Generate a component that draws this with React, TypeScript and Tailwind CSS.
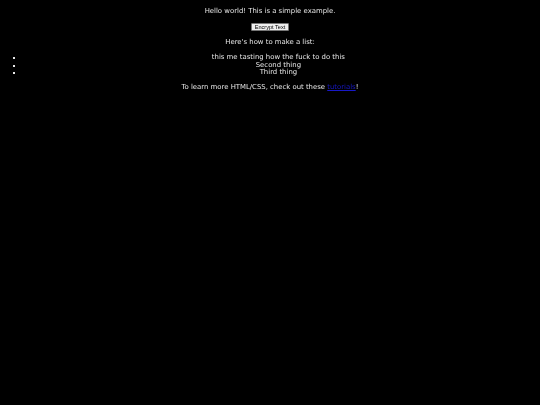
const items = ['this me tasting how the fuck to do this', 'Second thing', 'Third thing'];

export default function App() {
    return (
        <div
            className="min-h-screen bg-black px-[3.4px] pt-[8.2px] text-center text-[6.9px] leading-[7.7px] text-[#e6e6e6] antialiased [will-change:transform]"
            style={{ fontFamily: '"DejaVu Sans", sans-serif' }}
        >
            <p>Hello world! This is a simple example.</p>
            <div className="mt-[6.8px] flex justify-center">
                <button
                    className="h-[8px] rounded-[1px] border-[0.8px] border-[#767676] bg-[#efefef] px-[2.5px] text-[5.6px] leading-[6px] text-black"
                    style={{ fontFamily: '"Liberation Sans", Arial, sans-serif' }}
                >
                    Encrypt Text
                </button>
            </div>
            <p className="mt-[8.3px]">Here&apos;s how to make a list:</p>
            <ul className="mt-[7.3px] list-none pl-[16.8px]">
                {items.map((item) => (
                    <li
                        key={item}
                        className="relative before:absolute before:left-[-7.5px] before:top-[3px] before:h-[2px] before:w-[2px] before:bg-[#e6e6e6] before:content-['']"
                    >
                        {item}
                    </li>
                ))}
            </ul>
            <p className="mt-[7px]">
                To learn more HTML/CSS, check out these{' '}
                <a href="#" className="text-[#1818c8] underline">
                    tutorials
                </a>
                !
            </p>
        </div>
    );
}
